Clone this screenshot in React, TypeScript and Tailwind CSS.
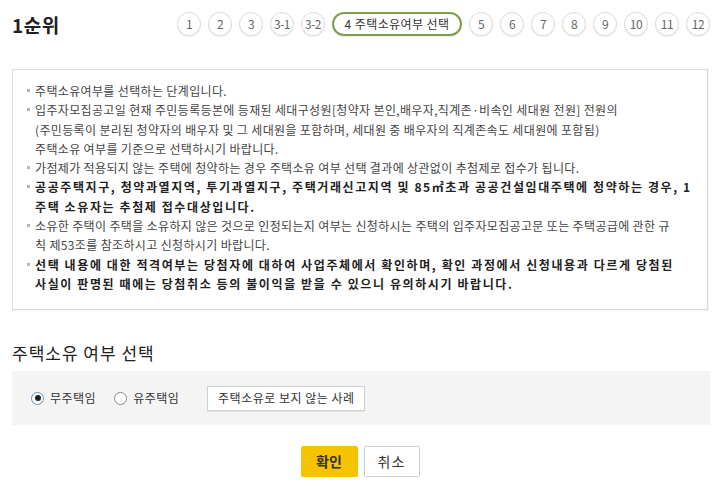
import React from "react";

const font = { fontFamily: '"Noto Sans CJK KR", "Noto Sans", sans-serif' };

const stepsBefore = ["1", "2", "3", "3-1", "3-2"];
const stepsAfter = ["5", "6", "7", "8", "9", "10", "11", "12"];

function Step({ label }: { label: string }) {
  return (
    <div className="w-[24px] h-[24px] rounded-full border border-[#dcdcdc] bg-white shadow-[0_1px_1px_rgba(0,0,0,0.08)] flex items-center justify-center text-[12px] text-[#666] tracking-[-0.5px]">
      {label}
    </div>
  );
}

function Item({ lines, bold = false }: { lines: string[]; bold?: boolean }) {
  return (
    <div className="flex">
      <span className="w-[8px] shrink-0 pt-[8px]">
        <span className="block w-[3px] h-[3px] bg-[#b5b5b5]" />
      </span>
      <div className={bold ? "font-bold text-[#222] tracking-[1.6px]" : "text-[#444] tracking-[0.35px]"}>
        {lines.map((l, i) => (
          <div key={i} className="whitespace-nowrap">
            {l}
          </div>
        ))}
      </div>
    </div>
  );
}

export default function App() {
  return (
    <div className="w-[720px] h-[500px] bg-white overflow-hidden" style={font}>
      {/* header */}
      <div className="h-[48px] flex items-center justify-between pl-[12px] pr-[10px]">
        <h1 className="text-[19px] font-bold text-[#222] leading-none tracking-[0.5px]">1순위</h1>
        <div className="flex items-center gap-[7px]">
          {stepsBefore.map((s) => (
            <Step key={s} label={s} />
          ))}
          <div className="h-[24px] w-[130px] rounded-full border-2 border-[#7c9e4e] bg-white flex items-center justify-center text-[12px] text-[#333] tracking-[0.4px] shadow-[0_1px_1px_rgba(0,0,0,0.08)]">
            4 주택소유여부 선택
          </div>
          {stepsAfter.map((s) => (
            <Step key={s} label={s} />
          ))}
        </div>
      </div>

      {/* notice box */}
      <div className="mx-[12px] mt-[21px] h-[241px] border border-[#dadada] shadow-[1px_1px_1px_rgba(0,0,0,0.05)] pl-[14px] pt-[11px] text-[12px] leading-[19.3px]">
        <Item lines={["주택소유여부를 선택하는 단계입니다."]} />
        <Item
          lines={[
            "입주자모집공고일 현재 주민등록등본에 등재된 세대구성원[청약자 본인,배우자,직계존·비속인 세대원 전원] 전원의",
            "(주민등록이 분리된 청약자의 배우자 및 그 세대원을 포함하며, 세대원 중 배우자의 직계존속도 세대원에 포함됨)",
            "주택소유 여부를 기준으로 선택하시기 바랍니다.",
          ]}
        />
        <Item lines={["가점제가 적용되지 않는 주택에 청약하는 경우 주택소유 여부 선택 결과에 상관없이 추첨제로 접수가 됩니다."]} />
        <Item
          bold
          lines={[
            "공공주택지구, 청약과열지역, 투기과열지구, 주택거래신고지역 및 85㎡초과 공공건설임대주택에 청약하는 경우, 1",
            "주택 소유자는 추첨제 접수대상입니다.",
          ]}
        />
        <Item
          lines={[
            "소유한 주택이 주택을 소유하지 않은 것으로 인정되는지 여부는 신청하시는 주택의 입주자모집공고문 또는 주택공급에 관한 규",
            "칙 제53조를 참조하시고 신청하시기 바랍니다.",
          ]}
        />
        <Item
          bold
          lines={[
            "선택 내용에 대한 적격여부는 당첨자에 대하여 사업주체에서 확인하며, 확인 과정에서 신청내용과 다르게 당첨된",
            "사실이 판명된 때에는 당첨취소 등의 불이익을 받을 수 있으니 유의하시기 바랍니다.",
          ]}
        />
      </div>

      {/* selection */}
      <h2 className="mt-[32px] ml-[12px] text-[17px] leading-[22px] text-[#222] tracking-[1px]">주택소유 여부 선택</h2>
      <div className="mt-[7px] mr-[10px] ml-[12px] h-[54px] bg-[#f4f4f4] flex items-center pl-[19px] text-[12px] text-[#333] tracking-[0.5px]">
        <label className="flex items-center gap-[6px]">
          <span className="w-[13px] h-[13px] rounded-full border border-[#5b8fc2] bg-white flex items-center justify-center">
            <span className="w-[6px] h-[6px] rounded-full bg-[#222]" />
          </span>
          무주택임
        </label>
        <label className="flex items-center gap-[6px] ml-[18px]">
          <span className="w-[13px] h-[13px] rounded-full border border-[#888] bg-white" />
          유주택임
        </label>
        <button className="ml-[28px] h-[25px] w-[158px] border border-[#cfcfcf] bg-white text-[12px] text-[#333] tracking-[0.5px] shadow-[0_1px_1px_rgba(0,0,0,0.06)]">
          주택소유로 보지 않는 사례
        </button>
      </div>

      {/* actions */}
      <div className="mt-[21px] flex justify-center gap-[6px]">
        <button className="w-[57px] h-[31px] bg-[#f7c200] rounded-[2px] text-[14px] font-bold text-[#333]">확인</button>
        <button className="w-[56px] h-[31px] bg-white border border-[#cfcfcf] rounded-[2px] text-[14px] text-[#333] tracking-[1px]">취소</button>
      </div>
    </div>
  );
}
